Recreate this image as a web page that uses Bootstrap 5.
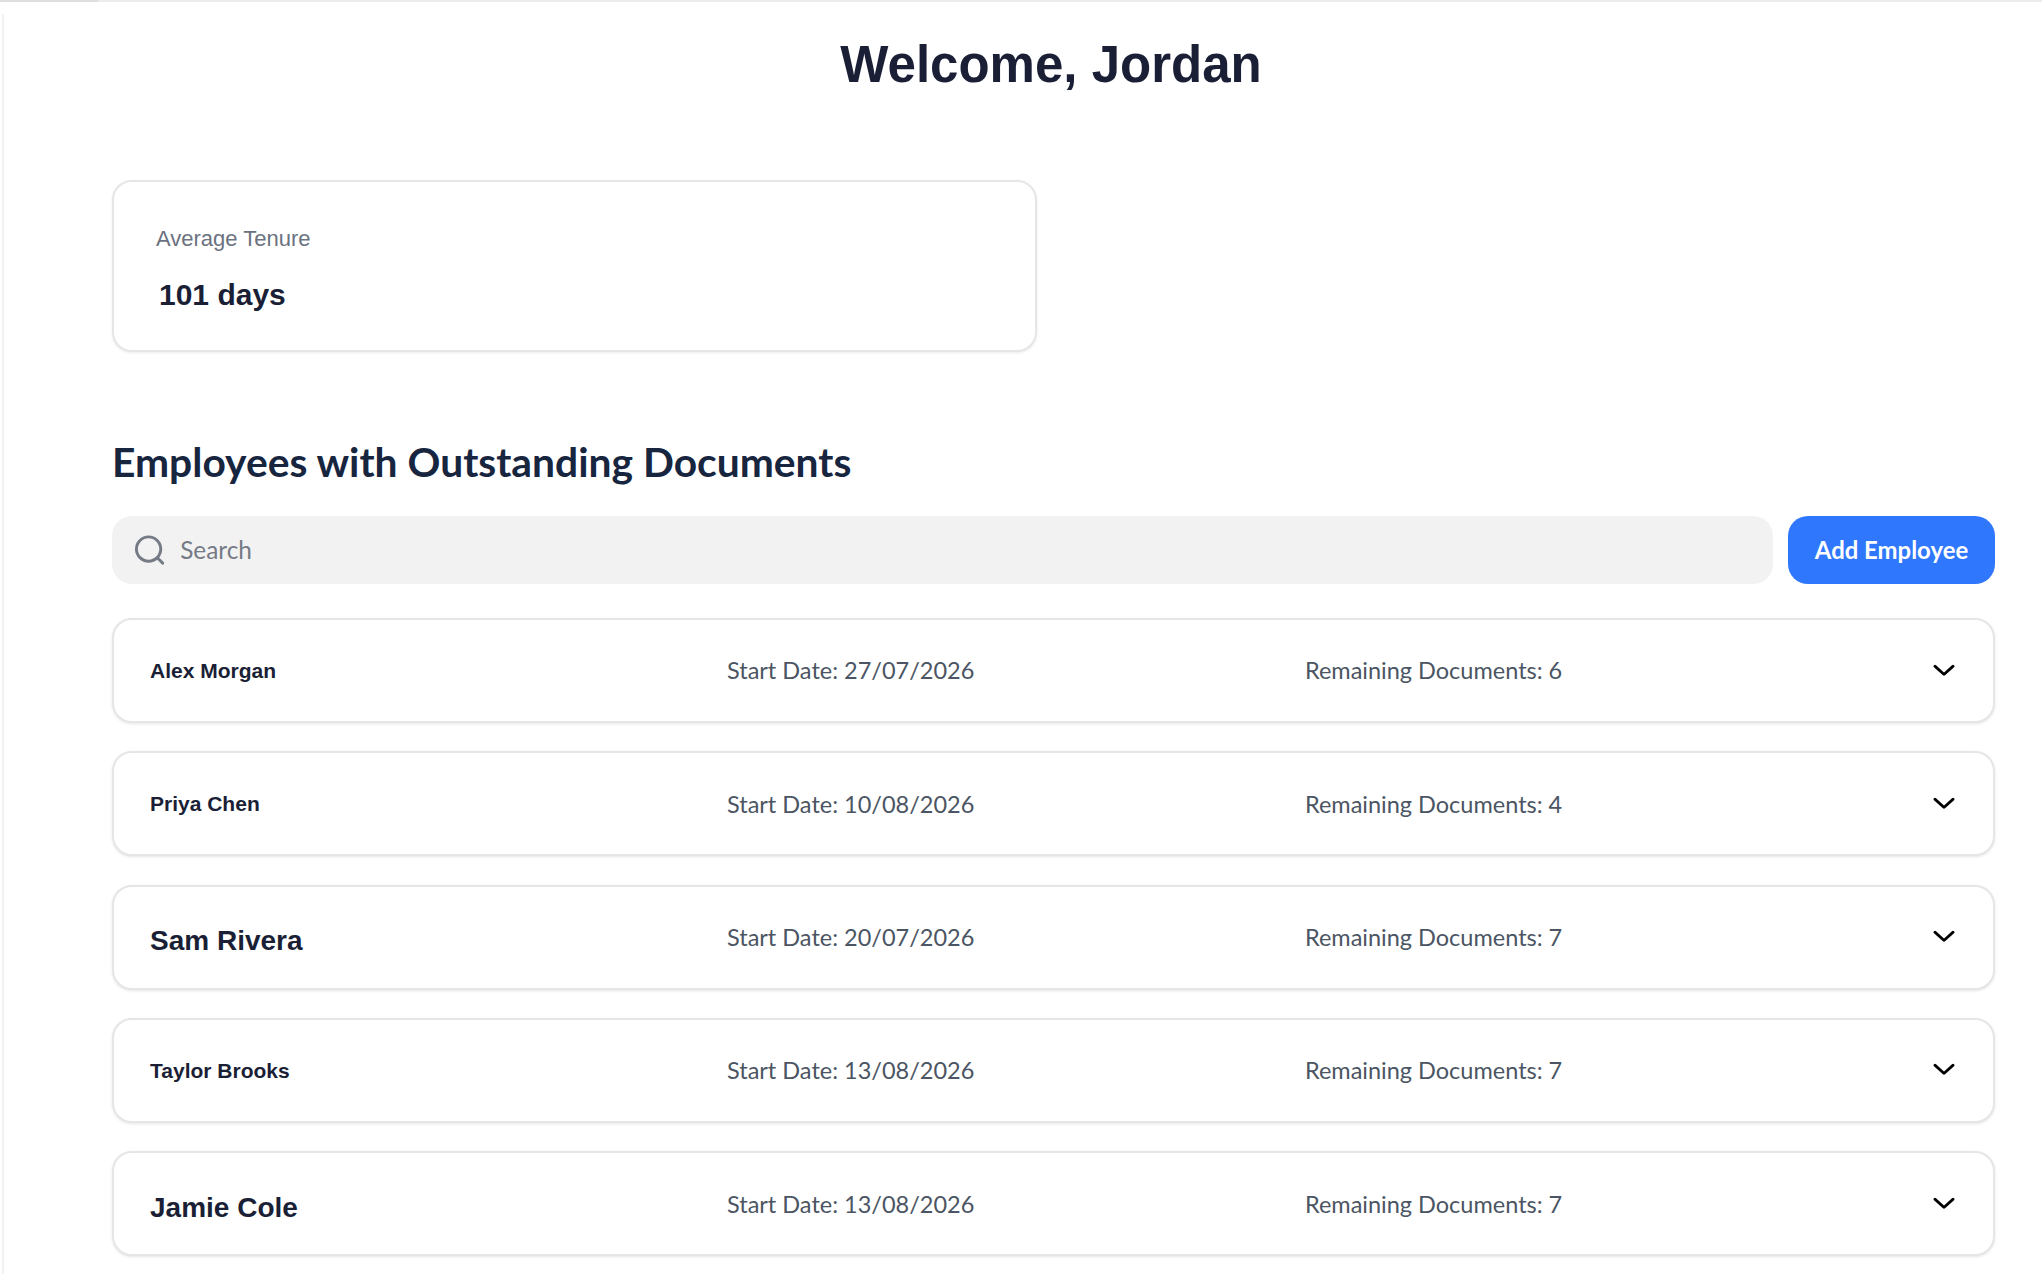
<!DOCTYPE html>
<html lang="en">
<head>
  <meta charset="UTF-8">
  <meta name="viewport" content="width=device-width, initial-scale=1.0">
  <title>Dashboard</title>
  <link href="https://cdn.jsdelivr.net/npm/bootstrap@5.3.0/dist/css/bootstrap.min.css" rel="stylesheet">
  <style>
    body {
      background-color: #fff;
      font-family: "Liberation Sans", Arial, sans-serif;
      color: #1a1f36;
      overflow: hidden;
    }
    .top-bar {
      height: 2px;
      background-color: #ececec;
    }
    .top-bar div {
      width: 98px;
      height: 2px;
      background-color: #dedede;
    }
    .page {
      margin: 12px 0 0 2px;
      min-height: calc(100vh - 14px);
      border-left: 2px solid #f2f2f2;
      padding: 20px 47px 0 108px;
    }
    .page-title {
      font-size: 51px;
      font-weight: 700;
      line-height: 62px;
      margin: 0;
      padding: 0 5px 0 0;
      color: #1a1f36;
    }
    .stat-card {
      width: 925px;
      height: 172px;
      margin-top: 84px;
      border: 2px solid #e6e6e6;
      border-radius: 20px;
      padding: 44px 42px 0;
      box-shadow: 0 1px 3px rgba(0, 0, 0, .08);
    }
    .stat-label {
      font-size: 22px;
      color: #6b7280;
      line-height: 26px;
    }
    .stat-value {
      font-size: 30px;
      font-weight: 700;
      margin: 25px 0 0 3px;
      line-height: 36px;
    }
    .section-title {
      font-family: Lato, sans-serif;
      font-size: 40.75px;
      font-weight: 700;
      line-height: 52px;
      color: #17253f;
      margin: 84px 0 28px;
    }
    .search-box {
      height: 68px;
      background-color: #f2f2f3;
      border-radius: 20px;
      padding: 0 22px;
      gap: 13px;
    }
    .search-box input {
      border: 0;
      background: transparent;
      outline: 0;
      width: 100%;
      font-family: Lato, sans-serif;
      font-size: 24.4px;
      color: #757b85;
    }
    .search-box input::placeholder {
      color: #757b85;
      opacity: 1;
    }
    .btn-add {
      width: 207px;
      height: 68px;
      flex: none;
      margin-left: 15px;
      border-radius: 20px;
      background-color: #2f77fc;
      color: #fff;
      font-family: Lato, sans-serif;
      font-size: 23.9px;
      font-weight: 700;
      padding: 0;
    }
    .employee-list {
      margin-top: 34px;
    }
    .employee {
      height: 105px;
      margin-bottom: 28.3px;
      border: 2px solid #e6e6e6;
      border-radius: 20px;
      padding: 0 37px 0 35px;
      box-shadow: 0 1px 3px rgba(0, 0, 0, .1);
    }
    .emp-cols {
      width: 1734px;
    }
    .emp-name {
      font-size: 21px;
      font-weight: 700;
      padding-left: 1px;
    }
    .emp-name.big {
      font-size: 28px;
      padding-top: 8px;
    }
    .emp-meta {
      font-family: Lato, sans-serif;
      font-size: 23.5px;
      color: #4b5563;
      padding-top: 1px;
    }
  </style>
</head>
<body>

<div class="top-bar"><div></div></div>
<div class="page">
  <h1 class="page-title text-center">Welcome, Jordan</h1>

  <div class="stat-card bg-white">
    <div class="stat-label">Average Tenure</div>
    <div class="stat-value">101 days</div>
  </div>

  <h2 class="section-title">Employees with Outstanding Documents</h2>

  <div class="d-flex">
    <div class="search-box d-flex align-items-center flex-grow-1">
      <svg width="32" height="32" viewBox="0 0 32 32" fill="none" stroke="#757b85" stroke-width="3" stroke-linecap="round">
        <circle cx="15" cy="15" r="12.5"/>
        <path d="M24.5 24.5l5 5"/>
      </svg>
      <input type="text" placeholder="Search">
    </div>
    <button type="button" class="btn btn-add">Add Employee</button>
  </div>

  <div class="employee-list" id="employeeList"></div>
</div>

<script>
  const employees = [
    { name: 'Alex Morgan', start: '27/07/2026', docs: 6, big: false },
    { name: 'Priya Chen', start: '10/08/2026', docs: 4, big: false },
    { name: 'Sam Rivera', start: '20/07/2026', docs: 7, big: true },
    { name: 'Taylor Brooks', start: '13/08/2026', docs: 7, big: false },
    { name: 'Jamie Cole', start: '13/08/2026', docs: 7, big: true }
  ];

  const chevron = '<svg width="24" height="24" viewBox="0 0 24 24" fill="none" stroke="#000" stroke-width="3" stroke-linecap="round" stroke-linejoin="round"><path d="M3 7l9 9 9-9" transform="translate(0 1) scale(1 .9)"/></svg>';

  document.getElementById('employeeList').innerHTML = employees.map(e => `
    <div class="employee bg-white d-flex align-items-center justify-content-between">
      <div class="emp-cols d-flex align-items-center">
        <div class="col-4 emp-name ${e.big ? 'big' : ''}">${e.name}</div>
        <div class="col-4 emp-meta">Start Date: ${e.start}</div>
        <div class="col-4 emp-meta">Remaining Documents: ${e.docs}</div>
      </div>
      ${chevron}
    </div>`).join('');
</script>

<script src="https://cdn.jsdelivr.net/npm/bootstrap@5.3.0/dist/js/bootstrap.bundle.min.js"></script>
</body>
</html>
